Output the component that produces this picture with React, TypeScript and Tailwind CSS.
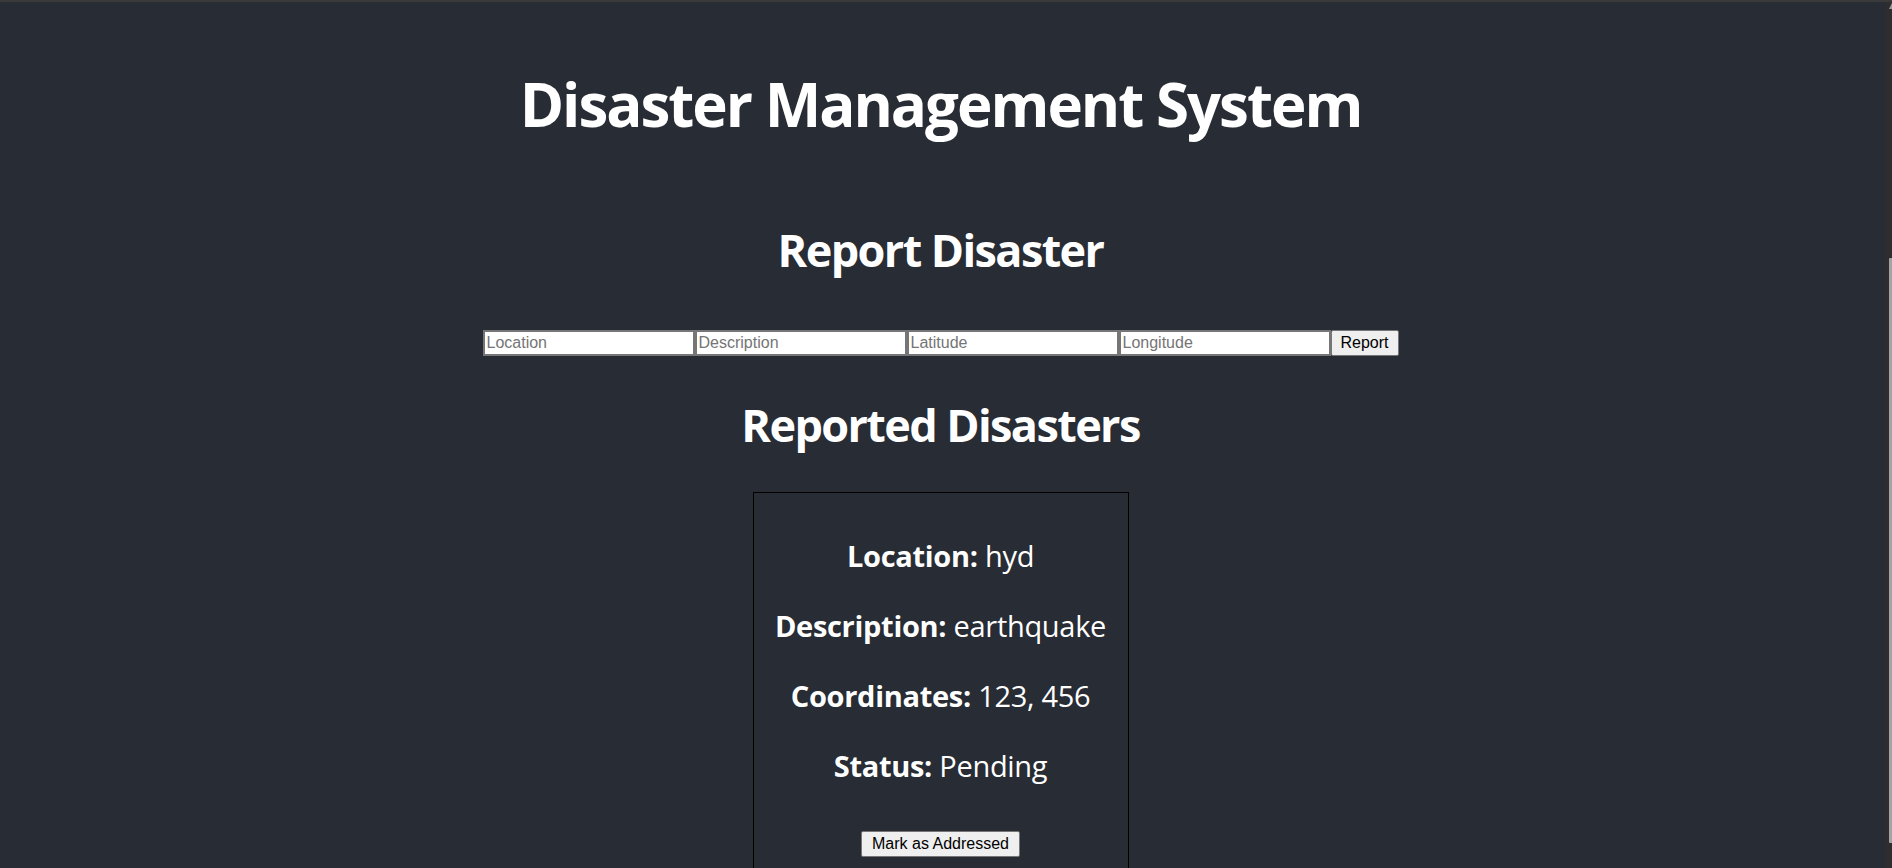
import React from "react";

const sans = "font-['Open_Sans','Noto_Sans',sans-serif]";

function Field({ label, value }: { label: string; value: string }) {
  return (
    <p className={`m-0 h-[40px] text-[29px] leading-[40px] whitespace-nowrap tracking-[-0.3px] ${sans}`}>
      <strong className="font-bold">{label}</strong> {value}
    </p>
  );
}

export default function App() {
  const inputCls =
    "w-[212px] h-[26px] border-2 border-[#767676] bg-white px-[2px] text-[16px] text-black placeholder:text-[#757575] font-['Liberation_Sans',Arial,sans-serif] outline-none";
  return (
    <div className="flex flex-col h-[868px] overflow-hidden bg-[#282c34]">
      <div className="h-[2px] w-full bg-[#3a3a3a] shrink-0" />
      <div className="flex flex-1 min-h-0">
        <main className="w-[1881px] shrink-0 flex flex-col items-center text-center text-white">
          <h1 className={`mt-[62px] h-[80px] text-[60px] leading-[80px] font-bold tracking-[-2px] whitespace-nowrap ${sans}`}>
            Disaster Management System
          </h1>
          <h2 className={`mt-[76px] h-[60px] text-[45px] leading-[60px] font-bold tracking-[-1.6px] whitespace-nowrap ${sans}`}>
            Report Disaster
          </h2>
          <form className="mt-[50px] flex h-[26px]" onSubmit={(e) => e.preventDefault()}>
            <input className={inputCls} placeholder="Location" />
            <input className={inputCls} placeholder="Description" />
            <input className={inputCls} placeholder="Latitude" />
            <input className={inputCls} placeholder="Longitude" />
            <button
              type="submit"
              className="w-[68px] h-[26px] border border-[#767676] rounded-[2px] bg-[#efefef] text-[16px] text-black font-['Liberation_Sans',Arial,sans-serif]"
            >
              Report
            </button>
          </form>
          <h2 className={`mt-[39px] h-[60px] text-[45px] leading-[60px] font-bold tracking-[-1.6px] whitespace-nowrap ${sans}`}>
            Reported Disasters
          </h2>
          <div className="mt-[37px] w-[376px] shrink-0 border border-black flex flex-col items-center pt-[43px] gap-[30px] pb-[20px]">
            <Field label="Location:" value="hyd" />
            <Field label="Description:" value="earthquake" />
            <Field label="Coordinates:" value="123, 456" />
            <Field label="Status:" value="Pending" />
            <button
              type="button"
              className="mt-[15px] h-[26px] px-[10px] border border-[#767676] rounded-[2px] bg-[#efefef] text-[16px] text-black font-['Liberation_Sans',Arial,sans-serif]"
            >
              Mark as Addressed
            </button>
          </div>
        </main>
        <div className="flex-1 flex justify-end">
          <div className="w-[6px] bg-[#2e2e2e] flex flex-col items-end">
            <svg width="4" height="8" viewBox="0 0 4 8">
              <path d="M4 1 L4 7 L1 7 Z" fill="#9a9a9a" />
            </svg>
            <div className="mt-[248px] w-[3px] h-[585px] bg-[#a3a3a3] rounded-l-[1px]" />
          </div>
        </div>
      </div>
    </div>
  );
}
